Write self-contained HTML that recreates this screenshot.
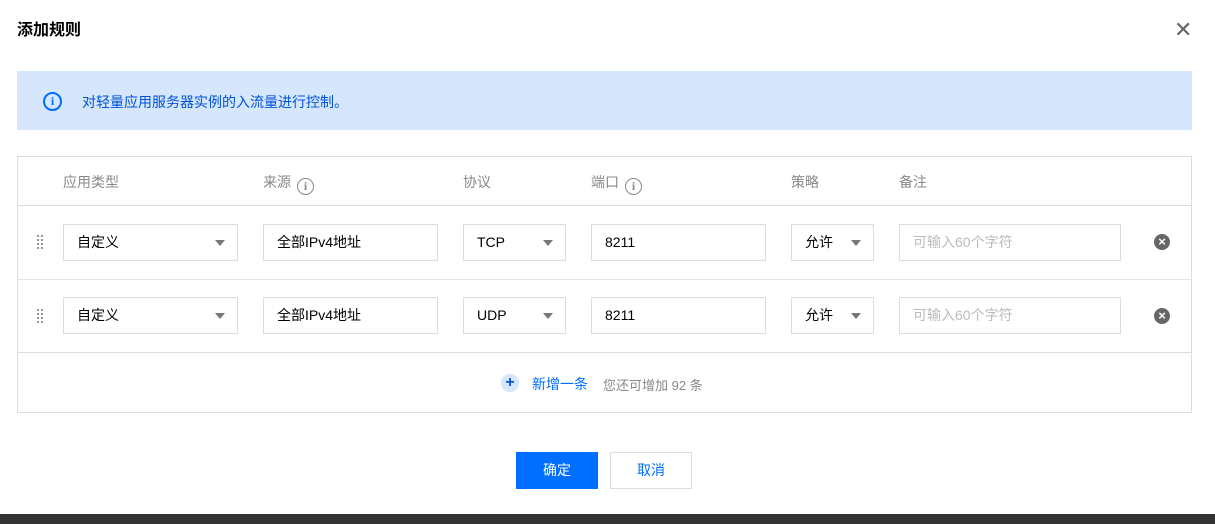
<!DOCTYPE html>
<html><head><meta charset="utf-8"><style>
*{margin:0;padding:0;box-sizing:border-box}
body{width:1215px;height:524px;background:#fff;position:relative;overflow:hidden;font-family:"Liberation Sans","Noto Sans CJK SC",sans-serif;font-size:14px;color:#000}
.a{position:absolute}
.box{position:absolute;border:1px solid #ddd;background:#fff;height:37px;line-height:35px;padding-left:13px;font-size:14px;color:#000}
.ar{position:absolute;right:12px;top:15px;width:0;height:0;border-left:5px solid transparent;border-right:5px solid transparent;border-top:6px solid #777}
.h{position:absolute;top:172px;color:#888;font-size:14px}
.ic{display:inline-block;width:17px;height:17px;border:1.8px solid #888;border-radius:50%;text-align:center;line-height:14px;font-size:12px;font-weight:bold;color:#888;vertical-align:-3px;margin-left:6px;font-family:"Liberation Serif",serif}
.x{position:absolute;width:16px;height:16px;border-radius:50%;background:#666;color:#fff;text-align:center;line-height:16px;font-size:13px;font-weight:bold}
.dr{position:absolute;width:8px;height:16px;background-image:radial-gradient(circle,#999 1.1px,transparent 1.3px);background-size:4px 4px}
</style></head><body>
<div class="a" style="left:17px;top:16px;font-size:16px;font-weight:bold">添加规则</div>
<div class="a" style="left:1174px;top:17px;font-size:22px;color:#666;line-height:26px">✕</div>
<div class="a" style="left:17px;top:71px;width:1175px;height:59px;background:#d5e6fd"></div>
<div class="a" style="left:43px;top:92px;width:19px;height:19px;border:2px solid #006eff;border-radius:50%;color:#006eff;text-align:center;font-size:12px;line-height:15px;font-weight:bold;font-family:'Liberation Serif',serif">i</div>
<div class="a" style="left:82px;top:92px;color:#0052d9;font-size:14px">对轻量应用服务器实例的入流量进行控制。</div>
<div class="a" style="left:17px;top:156px;width:1175px;height:257px;border:1px solid #ddd"></div>
<div class="a" style="left:17px;top:205px;width:1175px;height:1px;background:#ddd"></div>
<div class="a" style="left:17px;top:279px;width:1175px;height:1px;background:#e5e5e5"></div>
<div class="a" style="left:17px;top:352px;width:1175px;height:1px;background:#ddd"></div>
<div class="h" style="left:63px">应用类型</div>
<div class="h" style="left:263px">来源<span class="ic">i</span></div>
<div class="h" style="left:463px">协议</div>
<div class="h" style="left:591px">端口<span class="ic">i</span></div>
<div class="h" style="left:791px">策略</div>
<div class="h" style="left:899px">备注</div>

<div class="dr" style="left:36px;top:234px"></div>
<div class="box" style="left:63px;top:224px;width:175px">自定义<span class="ar"></span></div>
<div class="box" style="left:263px;top:224px;width:175px">全部IPv4地址</div>
<div class="box" style="left:463px;top:224px;width:103px">TCP<span class="ar"></span></div>
<div class="box" style="left:591px;top:224px;width:175px">8211</div>
<div class="box" style="left:791px;top:224px;width:83px">允许<span class="ar"></span></div>
<div class="box" style="left:899px;top:224px;width:222px;color:#bbb">可输入60个字符</div>
<div class="x" style="left:1154px;top:234px">×</div>

<div class="dr" style="left:36px;top:308px"></div>
<div class="box" style="left:63px;top:297px;width:175px">自定义<span class="ar"></span></div>
<div class="box" style="left:263px;top:297px;width:175px">全部IPv4地址</div>
<div class="box" style="left:463px;top:297px;width:103px">UDP<span class="ar"></span></div>
<div class="box" style="left:591px;top:297px;width:175px">8211</div>
<div class="box" style="left:791px;top:297px;width:83px">允许<span class="ar"></span></div>
<div class="box" style="left:899px;top:297px;width:222px;color:#bbb">可输入60个字符</div>
<div class="x" style="left:1154px;top:308px">×</div>

<div class="a" style="left:501px;top:374px;width:18px;height:18px;border-radius:50%;background:#d5e6fd;color:#0052d9;text-align:center;line-height:18px;font-weight:bold;font-size:16px">+</div>
<div class="a" style="left:532px;top:374px;color:#006eff;font-size:14px">新增一条</div>
<div class="a" style="left:603px;top:375px;color:#888;font-size:13px">您还可增加 92 条</div>

<div class="a" style="left:516px;top:452px;width:82px;height:37px;background:#006eff;color:#fff;text-align:center;line-height:37px;font-size:14px">确定</div>
<div class="a" style="left:610px;top:452px;width:82px;height:37px;border:1px solid #ddd;color:#006eff;text-align:center;line-height:35px;font-size:14px">取消</div>
<div class="a" style="left:0;top:514px;width:1215px;height:10px;background:#333"></div>
</body></html>
